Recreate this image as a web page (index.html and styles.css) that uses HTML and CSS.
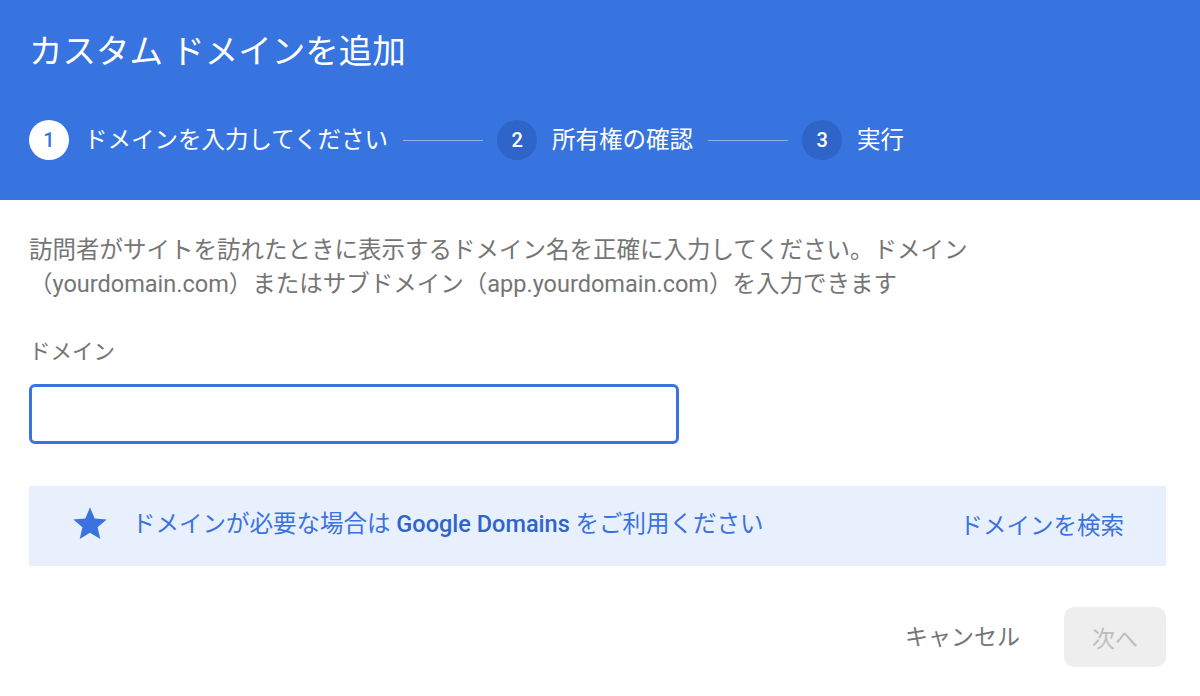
FILE: index.html
```html
<!DOCTYPE html>
<html lang="ja">
<head>
<meta charset="utf-8">
<link rel="stylesheet" href="styles.css">
</head>
<body>
<div class="dialog">
  <header class="header">
    <h1 class="title">カスタム ドメインを追加</h1>
    <div class="steps">
      <div class="step active"><span class="num">1</span><span class="label">ドメインを入力してください</span></div>
      <div class="line"></div>
      <div class="step"><span class="num">2</span><span class="label">所有権の確認</span></div>
      <div class="line"></div>
      <div class="step"><span class="num">3</span><span class="label">実行</span></div>
    </div>
  </header>
  <main class="content">
    <p class="desc">訪問者がサイトを訪れたときに表示するドメイン名を正確に入力してください。ドメイン（yourdomain.com）またはサブドメイン（app.yourdomain.com）を入力できます</p>
    <label class="field-label">ドメイン</label>
    <div class="input"></div>
    <div class="banner">
      <svg class="star" viewBox="0 0 24 24" width="40" height="40"><path fill="#3a73df" d="M12 17.27L18.18 21l-1.64-7.03L22 9.24l-7.19-.61L12 2 9.19 8.63 2 9.24l5.46 4.73L5.82 21z"/></svg>
      <span class="banner-text">ドメインが必要な場合は <b>Google Domains</b> をご利用ください</span>
      <span class="banner-link">ドメインを検索</span>
    </div>
    <div class="actions">
      <span class="cancel">キャンセル</span>
      <span class="next">次へ</span>
    </div>
  </main>
</div>
</body>
</html>
```
FILE: styles.css
```css
html, body {
  margin: 0;
  padding: 0;
  background: #ffffff;
}
body {
  font-family: Roboto, "Noto Sans CJK JP", sans-serif;
  width: 1200px;
  height: 696px;
  overflow: hidden;
}
.header {
  background: #3874e0;
  height: 200px;
  box-sizing: border-box;
  padding: 30px 29px 0;
  color: #ffffff;
}
.title {
  margin: 0;
  font-size: 33.5px;
  font-weight: 400;
  line-height: 44px;
}
.steps {
  margin-top: 46px;
  display: flex;
  align-items: center;
  height: 40px;
}
.step {
  display: flex;
  align-items: center;
  gap: 15px;
}
.num {
  width: 40px;
  height: 40px;
  border-radius: 50%;
  background: #2f64c8;
  color: #ffffff;
  display: flex;
  align-items: center;
  justify-content: center;
  font-family: Roboto, sans-serif;
  font-size: 20px;
  font-weight: 500;
}
.step.active .num {
  background: #ffffff;
  color: #3874e0;
}
.label {
  font-size: 23.5px;
  line-height: 30px;
  color: #ffffff;
}
.line {
  width: 80px;
  height: 1px;
  background: rgba(255, 255, 255, 0.45);
  margin: 0 14px 0 15px;
}
.content {
  padding: 0 34px 0 29px;
}
.desc {
  margin: 33px 0 0;
  font-size: 23.5px;
  line-height: 34px;
  color: #757575;
}
.field-label {
  display: block;
  margin-top: 36px;
  font-size: 21.5px;
  line-height: 30px;
  color: #757575;
}
.input {
  margin-top: 17px;
  width: 650px;
  height: 60px;
  box-sizing: border-box;
  border: 3px solid #3a73df;
  border-radius: 6px;
}
.banner {
  margin-top: 42px;
  height: 80px;
  background: #e8f0fd;
  display: flex;
  align-items: center;
  padding: 0 42px 0 41px;
}
.star {
  flex: none;
  display: block;
  margin-top: -4px;
}
.banner-text {
  margin-left: 22px;
  margin-bottom: 8px;
  font-size: 23.5px;
  color: #3a73df;
  flex: 1;
}
.banner-text b {
  font-weight: 500;
  color: #2f64c8;
}
.banner-link {
  margin-bottom: 4px;
  font-size: 23.5px;
  color: #3a73df;
}
.actions {
  margin-top: 41px;
  display: flex;
  justify-content: flex-end;
  align-items: center;
}
.cancel {
  font-size: 23px;
  color: #757575;
  margin-right: 44px;
  margin-bottom: 4px;
}
.next {
  width: 102px;
  height: 60px;
  border-radius: 10px;
  background: #eeeeee;
  color: #bdbdbd;
  font-size: 23px;
  display: flex;
  align-items: center;
  justify-content: center;
}
```
